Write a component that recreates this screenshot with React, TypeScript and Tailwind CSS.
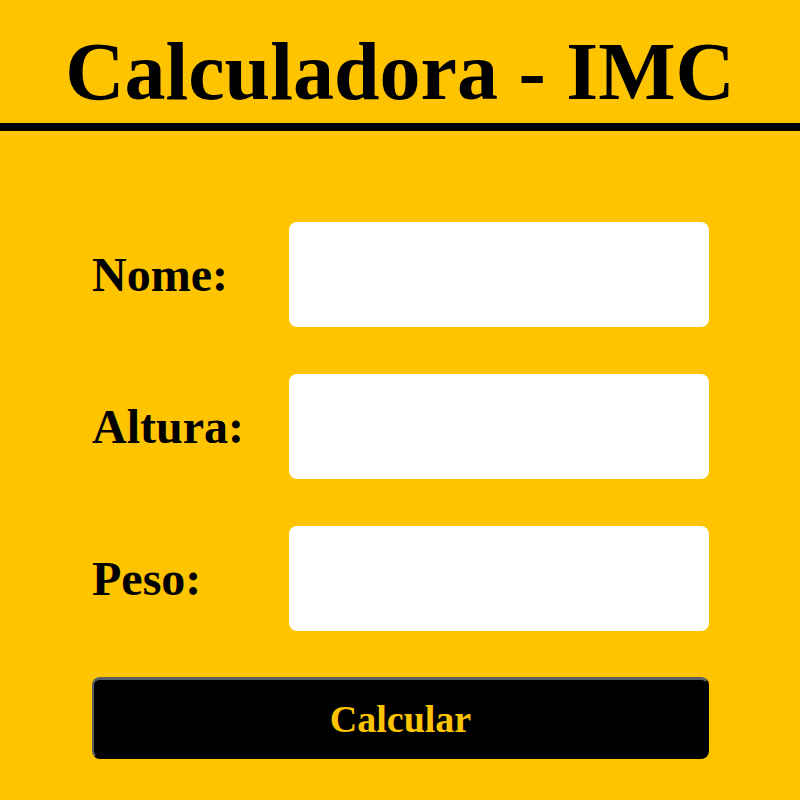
import React from "react";

export default function App() {
  const fields = ["Nome:", "Altura:", "Peso:"];
  return (
    <div
      className="min-h-[800px] w-full bg-[#ffc400] text-black"
      style={{ fontFamily: '"Liberation Serif", "Times New Roman", serif' }}
    >
      <h1 className="pt-[31px] pb-[10px] text-center text-[82px] leading-[82px] font-bold">
        Calculadora - IMC
      </h1>
      <div className="h-[8px] w-full bg-black" />
      <form
        className="flex flex-col gap-[47px] pl-[92px] pr-[91px] pt-[91px]"
        onSubmit={(e) => e.preventDefault()}
      >
        {fields.map((f) => (
          <div key={f} className="flex h-[105px] items-center">
            <label className="w-[197px] text-[48px] leading-[48px] font-bold">
              {f}
            </label>
            <input
              type="text"
              className="h-full flex-1 rounded-[8px] border-0 bg-white outline-none"
            />
          </div>
        ))}
        <button
          type="submit"
          className="-mt-[1px] flex h-[82px] items-center justify-center rounded-[8px] border-[2px] border-t-[3px] border-t-[#5a5e66] border-l-[#5a5e66] border-r-black border-b-black bg-black text-[38px] leading-[38px] font-bold text-[#ffc400]"
        >
          Calcular
        </button>
      </form>
    </div>
  );
}
